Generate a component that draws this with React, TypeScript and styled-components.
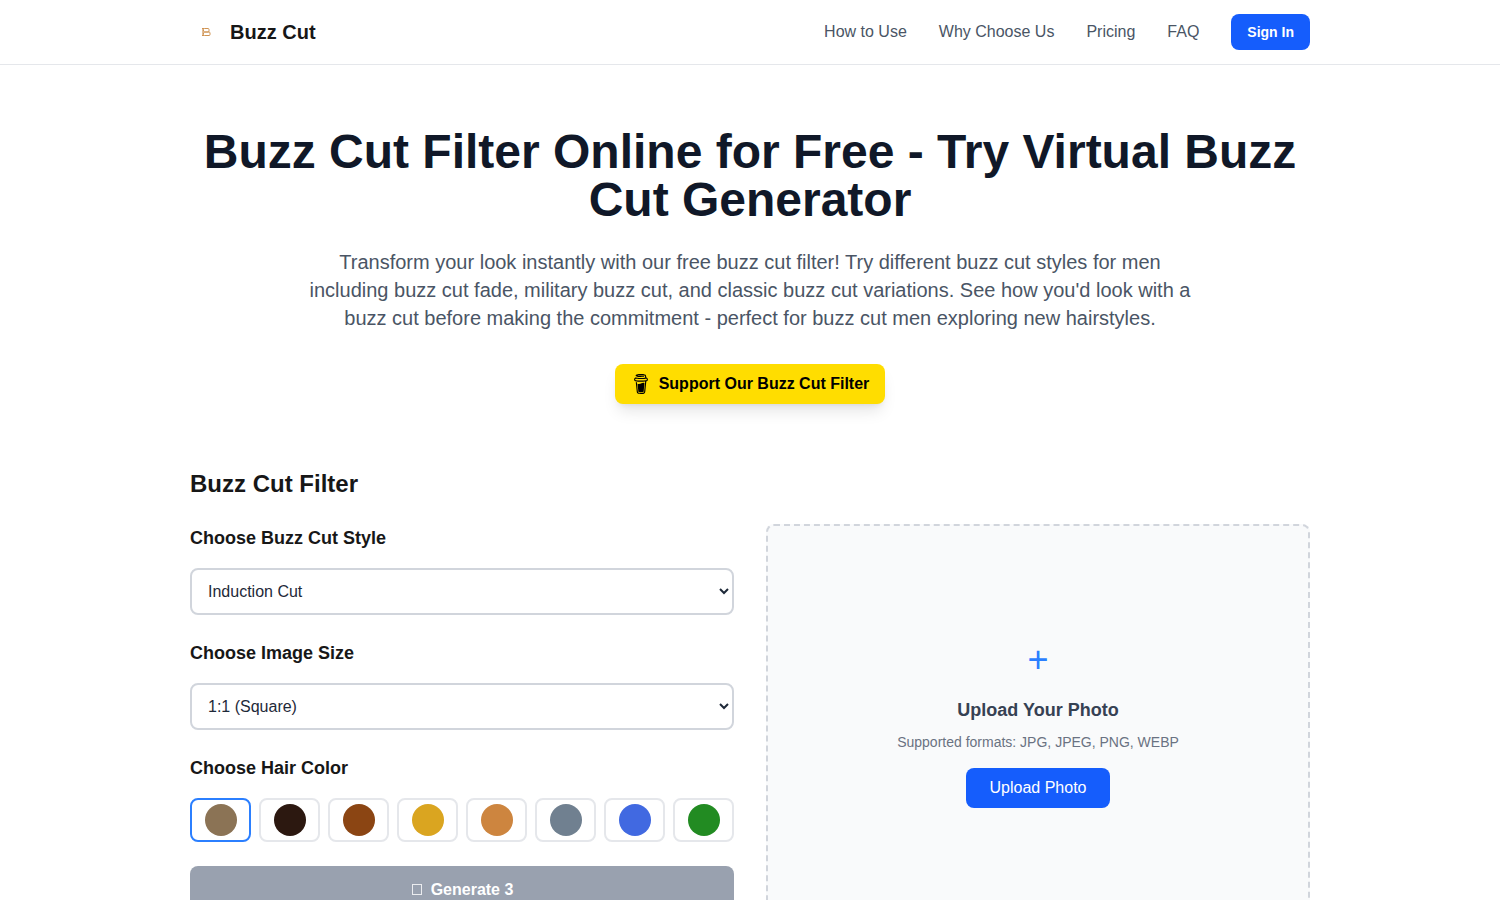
import React, { useState } from "react";
import styled, { createGlobalStyle } from "styled-components";
import { SiBuymeacoffee } from "react-icons/si";

const GlobalStyle = createGlobalStyle`
  *, *::before, *::after { box-sizing: border-box; }
  body {
    margin: 0;
    background: #ffffff;
    color: #171717;
    font-family: "Liberation Sans", Arial, sans-serif;
    font-size: 16px;
    line-height: 24px;
  }
  h1, h2, h3, p { margin: 0; }
  button, select, input { font: inherit; color: inherit; }
  a { color: inherit; text-decoration: none; }
`;

const Container = styled.div`
  max-width: 1152px;
  margin: 0 auto;
  padding: 0 16px;
`;

const Header = styled.header`
  background: #ffffff;
  border-bottom: 1px solid #e5e7eb;
`;

const HeaderBar = styled(Container)`
  display: flex;
  align-items: center;
  justify-content: space-between;
  height: 64px;
`;

const Brand = styled.a`
  display: flex;
  align-items: center;
  gap: 8px;
  font-size: 20px;
  line-height: 28px;
  font-weight: 700;
`;

const Nav = styled.nav`
  display: flex;
  align-items: center;
  gap: 32px;
  color: #4a5565;
`;

const SignIn = styled.button`
  height: 36px;
  padding: 0 16px;
  border: 0;
  border-radius: 8px;
  background: #155dfc;
  color: #ffffff;
  font-size: 14px;
  line-height: 20px;
  font-weight: 700;
  cursor: pointer;
`;

const Main = styled(Container).attrs({ as: "main" })`
  padding-top: 63px;
`;

const Hero = styled.section`
  display: flex;
  flex-direction: column;
  align-items: center;
  text-align: center;
  margin-bottom: 64px;
`;

const Title = styled.h1`
  margin-bottom: 24px;
  color: #101828;
  font-size: 48px;
  line-height: 48px;
  font-weight: 700;
`;

const Lead = styled.p`
  max-width: 896px;
  margin-bottom: 32px;
  color: #4a5565;
  font-size: 20px;
  line-height: 28px;
`;

const SupportLink = styled.a`
  display: inline-flex;
  align-items: center;
  gap: 8px;
  padding: 8px 16px;
  border-radius: 8px;
  background: #ffdd00;
  color: #000000;
  font-weight: 700;
  box-shadow: 0 10px 15px -3px rgba(0, 0, 0, 0.1), 0 4px 6px -4px rgba(0, 0, 0, 0.1);
`;

const SectionTitle = styled.h2`
  margin-bottom: 24px;
  font-size: 24px;
  line-height: 32px;
  font-weight: 700;
`;

const Columns = styled.div`
  display: grid;
  grid-template-columns: repeat(2, minmax(0, 1fr));
  gap: 32px;
  align-items: start;
`;

const Form = styled.form`
  display: flex;
  flex-direction: column;
  gap: 24px;
`;

const Field = styled.div`
  display: flex;
  flex-direction: column;
  gap: 16px;
`;

const Label = styled.label`
  font-size: 18px;
  line-height: 28px;
  font-weight: 700;
`;

const Select = styled.select`
  width: 100%;
  height: 47px;
  padding: 12px;
  border: 2px solid #d1d5dc;
  border-radius: 8px;
  background: #ffffff;
  color: #1e2939;
`;

const SwatchGroup = styled.fieldset`
  min-width: 0;
  margin: 0;
  padding: 0;
  border: 0;
`;

const Legend = styled.legend`
  margin-bottom: 16px;
  padding: 0;
  font-size: 18px;
  line-height: 28px;
  font-weight: 700;
`;

const Swatches = styled.div`
  display: grid;
  grid-template-columns: repeat(8, minmax(0, 1fr));
  gap: 8px;
`;

const Swatch = styled.label<{ $selected: boolean }>`
  display: flex;
  align-items: center;
  justify-content: center;
  height: 44px;
  border: 2px solid ${(p) => (p.$selected ? "#2b7fff" : "#e5e7eb")};
  border-radius: 8px;
  cursor: pointer;
`;

const SwatchRadio = styled.input<{ $color: string }>`
  appearance: none;
  width: 32px;
  height: 32px;
  margin: 0;
  border-radius: 50%;
  background: ${(p) => p.$color};
  cursor: pointer;
`;

const Generate = styled.button`
  display: flex;
  align-items: center;
  justify-content: center;
  gap: 8px;
  height: 48px;
  border: 0;
  border-radius: 8px;
  background: #99a1af;
  color: #ffffff;
  font-weight: 700;
`;

const Dropzone = styled.section`
  display: flex;
  flex-direction: column;
  align-items: center;
  justify-content: center;
  min-height: 400px;
  padding: 32px;
  border: 2px dashed #d1d5dc;
  border-radius: 8px;
  background: #f9fafb;
  text-align: center;
`;

const Plus = styled.span`
  margin-bottom: 16px;
  color: #2b7fff;
  font-size: 36px;
  line-height: 40px;
`;

const DropTitle = styled.h3`
  margin-bottom: 8px;
  color: #364153;
  font-size: 18px;
  line-height: 28px;
  font-weight: 700;
`;

const Formats = styled.p`
  margin-bottom: 16px;
  color: #6a7282;
  font-size: 14px;
  line-height: 20px;
`;

const UploadButton = styled.button`
  height: 40px;
  padding: 0 24px;
  border: 0;
  border-radius: 8px;
  background: #155dfc;
  color: #ffffff;
  cursor: pointer;
`;

const BrandMark = () => (
  <svg width="32" height="32" viewBox="0 0 32 32" fill="none" stroke="#cf9352" aria-hidden="true">
    <rect x="13.5" y="12.5" width="5.5" height="3.5" rx="1" />
    <rect x="13.5" y="16" width="6.5" height="3.5" rx="1" />
    <line x1="12" y1="12.5" x2="14" y2="12.5" />
    <line x1="12" y1="19.5" x2="14" y2="19.5" />
    <line x1="12.5" y1="12" x2="12.5" y2="20" strokeOpacity="0.6" />
  </svg>
);

const OutlineBox = () => (
  <svg width="12" height="12" viewBox="0 0 12 12" fill="none" stroke="currentColor" strokeOpacity="0.8" aria-hidden="true">
    <rect x="1.5" y="0.5" width="9" height="10" />
  </svg>
);

const links = [
  ["How to Use", "#how-to-use"],
  ["Why Choose Us", "#why-choose-us"],
  ["Pricing", "#pricing"],
  ["FAQ", "#faq"],
];

const hairColors = [
  ["Light brown", "#8b7355"],
  ["Black", "#2c1810"],
  ["Auburn", "#8b4513"],
  ["Blonde", "#daa520"],
  ["Copper", "#cd853f"],
  ["Gray", "#708090"],
  ["Blue", "#4169e1"],
  ["Green", "#228b22"],
];

export default function App() {
  const [color, setColor] = useState(hairColors[0][0]);

  return (
    <>
      <GlobalStyle />
      <Header>
        <HeaderBar>
          <Brand href="#">
            <BrandMark />
            Buzz Cut
          </Brand>
          <Nav>
            {links.map(([text, href]) => (
              <a key={href} href={href}>{text}</a>
            ))}
            <SignIn type="button">Sign In</SignIn>
          </Nav>
        </HeaderBar>
      </Header>
      <Main>
        <Hero>
          <Title>Buzz Cut Filter Online for Free - Try Virtual Buzz Cut Generator</Title>
          <Lead>
            Transform your look instantly with our free buzz cut filter! Try different buzz cut
            styles for men including buzz cut fade, military buzz cut, and classic buzz cut
            variations. See how you'd look with a buzz cut before making the commitment - perfect
            for buzz cut men exploring new hairstyles.
          </Lead>
          <SupportLink href="#support">
            <SiBuymeacoffee size={20} aria-hidden="true" />
            Support Our Buzz Cut Filter
          </SupportLink>
        </Hero>
        <SectionTitle>Buzz Cut Filter</SectionTitle>
        <Columns>
          <Form onSubmit={(e) => e.preventDefault()}>
            <Field>
              <Label htmlFor="style">Choose Buzz Cut Style</Label>
              <Select id="style">
                <option>Induction Cut</option>
              </Select>
            </Field>
            <Field>
              <Label htmlFor="size">Choose Image Size</Label>
              <Select id="size">
                <option>1:1 (Square)</option>
              </Select>
            </Field>
            <SwatchGroup>
              <Legend>Choose Hair Color</Legend>
              <Swatches>
                {hairColors.map(([name, value]) => (
                  <Swatch key={name} $selected={name === color} title={name}>
                    <SwatchRadio
                      type="radio"
                      name="hair-color"
                      aria-label={name}
                      $color={value}
                      checked={name === color}
                      onChange={() => setColor(name)}
                    />
                  </Swatch>
                ))}
              </Swatches>
            </SwatchGroup>
            <Generate type="submit" disabled>
              <OutlineBox />
              Generate 3
            </Generate>
          </Form>
          <Dropzone>
            <Plus aria-hidden="true">+</Plus>
            <DropTitle>Upload Your Photo</DropTitle>
            <Formats>Supported formats: JPG, JPEG, PNG, WEBP</Formats>
            <UploadButton type="button">Upload Photo</UploadButton>
          </Dropzone>
        </Columns>
      </Main>
    </>
  );
}
